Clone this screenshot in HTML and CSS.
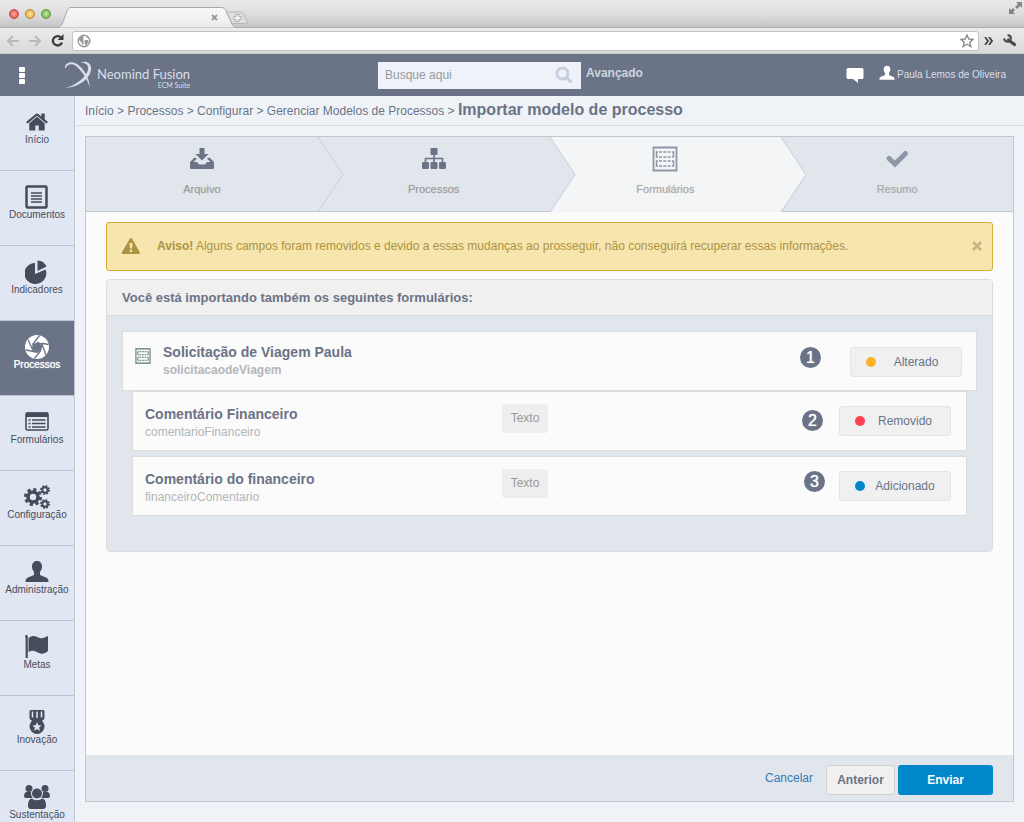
FILE: index.html
```html
<!DOCTYPE html>
<html lang="pt-BR">
<head>
<meta charset="utf-8">
<title>Importar modelo de processo</title>
<link rel="stylesheet" href="styles.css">
</head>
<body>
<svg class="defs" aria-hidden="true">
  <symbol id="i-user" viewBox="0 0 24 24"><path d="M12 1c3 0 5 2 5 5.500c0 2.500-1 4-2 5.500v3l6 2.500c2 1 2.500 2 2.500 4.500h-23c0-2.500.5-3.500 2.500-4.500l6-2.500v-3c-1-1.500-2-3-2-5.500c0-3.500 2-5.500 5-5.500z"/></symbol>
  <symbol id="i-form" viewBox="0 0 26 26"><path fill="none" stroke="currentColor" stroke-width="1.800" d="M1.500 1.500h23v23h-23z"/><path fill="none" stroke="currentColor" stroke-width="1.500" d="M6 6H4.500v5H6M20 6h1.500v5H20M6 15H4.500v5H6M20 15h1.500v5H20"/><path fill="none" stroke="currentColor" stroke-width="1.600" stroke-dasharray="3 1.300" d="M7 6h12M7 11h12M7 15h12M7 20h12"/></symbol>
</svg>

<div class="browser">
  <div class="tabstrip">
    <div class="lights"><i class="red"></i><i class="yellow"></i><i class="green"></i></div>
    <svg class="tab" width="194" height="21" viewBox="0 0 194 21">
      <defs><linearGradient id="tabfill" x1="0" y1="0" x2="0" y2="1"><stop offset="0" stop-color="#f8f8f8"/><stop offset="1" stop-color="#ececec"/></linearGradient></defs>
      <path d="M0 20.500C4 20 5 18 6 15L10 4C11 1.500 12 .5 14 .5H164C167 .5 168 1.500 169 4L174 15C175 18 177 20 180 20.500" fill="url(#tabfill)" stroke="#a9a9a9"/>
      <path d="M155 8l5 5M160 8l-5 5" stroke="#999" stroke-width="1.800"/>
      <path d="M171 5H183C185 5 186 6 187 8L190 14C191 16 190 16.500 188 16.500H178C176 16.500 175 16 174 14L171 8C170 6 170 5 171 5z" fill="#dedede" stroke="#b5b5b5"/>
      <path d="M180.500 7v8M176.500 11h8" stroke="#b0b0b0" stroke-width="4"/><path d="M180.500 8v6M177.500 11h6" stroke="#f3f3f3" stroke-width="2"/>
    </svg>
    <svg class="expand" width="13" height="12" viewBox="0 0 13 12"><path d="M7 0h6v6l-2-2-3 3-2-2 3-3zM6 12h-6v-6l2 2 2-2 2 2-2 2z" fill="#858585"/></svg>
  </div>
  <div class="toolbar">
    <svg width="12" height="12" viewBox="0 0 12 12"><path d="M12 6H2M6 1L1 6l5 5" fill="none" stroke="#b9b9b9" stroke-width="2"/></svg>
    <svg width="12" height="12" viewBox="0 0 12 12"><path d="M0 6h10M6 1l5 5-5 5" fill="none" stroke="#b9b9b9" stroke-width="2"/></svg>
    <svg width="13" height="13" viewBox="0 0 13 13"><path d="M10 3.500A4.700 4.700 0 1 0 11 8.500" fill="none" stroke="#3c3c3c" stroke-width="2.300"/><path d="M12.500 0v6h-6z" fill="#3c3c3c"/></svg>
    <label class="url">
      <svg width="14" height="14" viewBox="0 0 14 14"><circle cx="7" cy="7" r="5.800" fill="#fff" stroke="#9a9a9a" stroke-width="1.400"/><path d="M3 3l3-1 1 1-1 2 1 1-1 1 1 2-1 2-2-3L2 6zM8 6l3 0 1 2-2 2-1 2-1-1 0-2-1-1zM9 2l2 1 0 1-2-1z" fill="#9a9a9a"/></svg>
      <input type="text" aria-label="Endereço">
      <svg width="14" height="14" viewBox="0 0 14 14"><path d="M7 1l1.800 4 4.200.4-3.200 2.800 1 4.300L7 10.200l-3.800 2.300 1-4.300L1 5.400 5.200 5z" fill="#fff" stroke="#8a8a8a" stroke-width="1.400"/></svg>
    </label>
    <svg width="9" height="8" viewBox="0 0 9 8"><path d="M1 0l3 4-3 4M5 0l3 4-3 4" fill="none" stroke="#444" stroke-width="1.800"/></svg>
    <svg width="14" height="13" viewBox="0 0 14 13"><path d="M5.500 6L11.500 10.500" fill="none" stroke="#4a4a4a" stroke-width="3.200" stroke-linecap="round"/><path d="M4.500 1.500C7 1 8.500 3 7.500 5.500M1 4.500C1.500 7.500 4 8 6 7.500" fill="none" stroke="#4a4a4a" stroke-width="2.200"/></svg>
  </div>
</div>

<header class="header">
  <button class="dots" aria-label="Menu"><i></i><i></i><i></i></button>
  <div class="logo">
    <svg width="28" height="28" viewBox="0 0 28 28"><path d="M1 8C0 2 7-1 13 3C19 7 25 15 26 27C23 17 17 9 12 5C8 2 3 3 1 8z"/><path d="M16 2C22-1 28 2 27 9C26 17 16 26 1 27C13 24 22 16 24 9C25 4 21 1 16 2z"/></svg>
    <div class="logo-text"><span>Neomind Fusion</span><small>ECM Suite</small></div>
  </div>
  <form class="search">
    <input type="search" placeholder="Busque aqui" aria-label="Busque aqui">
    <button type="button" aria-label="Buscar"><svg width="18" height="18" viewBox="0 0 18 18"><circle cx="7.500" cy="7.500" r="5.500" fill="none" stroke="#c5d0e0" stroke-width="3"/><path d="M11.500 11.500l4 4" stroke="#c5d0e0" stroke-width="3.200" stroke-linecap="round"/></svg></button>
  </form>
  <a class="advanced" href="#">Avançado</a>
  <div class="account">
    <svg width="18" height="15" viewBox="0 0 18 15"><path d="M2 0h14q1.500 0 1.500 1.500v8q0 1.500-1.500 1.500h-4v4l-5-4h-5q-1.500 0-1.500-1.500v-8q0-1.500 1.500-1.500z" fill="#fff"/></svg>
    <svg class="me" width="16" height="16"><use href="#i-user"/></svg>
    <span>Paula Lemos de Oliveira</span>
  </div>
</header>

<div class="body">
  <nav class="sidebar">
    <a href="#"><svg viewBox="0 0 1664 1792"><path d="M1408 992v480q0 26-19 45t-45 19h-384v-384h-256v384h-384q-26 0-45-19t-19-45v-480q0-1 .5-3t.5-3l575-474 575 474q1 2 1 6zm223-69l-62 74q-8 9-21 11h-3q-13 0-21-7l-692-577-692 577q-12 8-24 7-13-2-21-11l-62-74q-8-10-7-23.500t11-21.500l719-599q32-26 76-26t76 26l244 204v-195q0-14 9-23t23-9h192q14 0 23 9t9 23v408l219 182q10 8 11 21.500t-7 23.500z"/></svg>Início</a>
    <a href="#"><svg viewBox="0 0 24 24"><rect x="1.500" y="1.500" width="20" height="21" rx="1" fill="none" stroke="currentColor" stroke-width="2.500"/><path d="M6 8h11M6 11h11M6 14h11M6 17h11" stroke="currentColor" stroke-width="1.500"/></svg>Documentos</a>
    <a href="#"><svg viewBox="0 0 24 24"><path d="M10 3v11l10.500-4.500A11 10.500 0 1 1 10 3z"/><path d="M12.500 0.500V11L21.500 6.500A10 10 0 0 0 12.500.5z"/></svg>Indicadores</a>
    <a href="#" class="active"><svg viewBox="0 0 24 24"><circle cx="12" cy="12" r="12"/><path d="M12 7.500l4 2.200v4.600l-4 2.200-4-2.200V9.700z" fill="#6b7386"/><path d="M7.200 9.500L18 8.500 23.500 9.500M12 7l5 2.500L21 20M16.800 9.500L15.500 16 9.500 23.500M16 14.500L12 17.200 1 15M12 17L7.500 14.500 3 4.500M8 15V9L14.500.5" fill="none" stroke="#6b7386" stroke-width="1.300"/></svg>Processos</a>
    <a href="#"><svg viewBox="0 0 24 24"><rect x="1" y="3" width="22" height="17" rx="1.500" fill="none" stroke="currentColor" stroke-width="1.600"/><path d="M1 2.500h22V7H1z"/><path d="M7 10h13.500M7 13.500h13.500M7 17h13.500M3.500 10h2M3.500 13.500h2M3.500 17h2" stroke="currentColor" stroke-width="1.600"/></svg>Formulários</a>
    <a href="#"><svg class="wide" viewBox="0 0 26 24"><g fill="none" stroke="currentColor"><circle cx="9" cy="12" r="5" stroke-width="3.600"/><circle cx="9" cy="12" r="7.500" stroke-width="3" stroke-dasharray="3.200 2.690"/><circle cx="21" cy="5" r="2.700" stroke-width="2"/><circle cx="21" cy="5" r="4" stroke-width="2" stroke-dasharray="1.700 1.440"/><circle cx="21" cy="19" r="2.700" stroke-width="2"/><circle cx="21" cy="19" r="4" stroke-width="2" stroke-dasharray="1.700 1.440"/></g></svg>Configuração</a>
    <a href="#"><svg><use href="#i-user"/></svg>Administração</a>
    <a href="#"><svg viewBox="0 0 24 24"><path d="M0 1.500a1.300 1.300 0 0 1 2.800 0v21.500h-2.200V3z"/><path d="M3.500 3C8.500-.5 11 1.500 14.500 3C17.500 4 20 2.500 23 1V16C20 18.500 17 19.500 14 18C10 16 8 14.500 3.500 17z"/></svg>Metas</a>
    <a href="#"><svg viewBox="0 0 24 24"><path d="M6 0h12q1.500 0 1.500 1.500V8q0 2-3 3h-9q-3-1-3-3V1.500Q4.500 0 6 0z"/><path d="M7.500 1.500v6M12 1.500V8M16.500 1.500v6" stroke="#e1e7f2" stroke-width="1.500"/><circle cx="12" cy="16.500" r="7.500"/><path d="M12 12l1.300 3.200 3.400.2-2.600 2.200.8 3.300-2.900-1.800-2.900 1.800.8-3.300-2.600-2.200 3.400-.2z" fill="#e1e7f2"/></svg>Inovação</a>
    <a href="#"><svg class="wide" viewBox="0 0 26 24"><circle cx="5" cy="3.500" r="3.500"/><circle cx="21" cy="3.500" r="3.500"/><path d="M2 7h5q0 4 2 6H2q-2 0-2-2Q0 8 2 7zM24 7h-5q0 4-2 6h7q2 0 2-2Q26 8 24 7z"/><circle cx="13" cy="8.500" r="5.600" fill="#e1e7f2"/><circle cx="13" cy="8.500" r="5"/><path d="M7.500 13.500q2.500 1.800 5.500 1.800t5.500-1.800q3.500 1 3.500 7 0 3.500-3 3.500H7q-3 0-3-3.500 0-6 3.500-7z"/></svg>Sustentação</a>
  </nav>

  <main class="main">
    <div class="crumbs">
      <a href="#">Início</a> &gt; <a href="#">Processos</a> &gt; <a href="#">Configurar</a> &gt; <a href="#">Gerenciar Modelos de Processos</a> &gt; <h1>Importar modelo de processo</h1>
    </div>

    <section class="wizard">
      <ol class="steps">
        <li class="step">
          <svg class="step-icon" viewBox="0 0 26 26"><path d="M10.500 2h5v6h4L13 14.500 6.500 8h4z"/><path d="M5.500 11.500L8 12.500 4.500 16H8l2 2.500h6l2-2.500h3.500L18 12.500l2.500-1L25 16v6q0 1-1 1H2q-1 0-1-1v-6z"/></svg>
          <span>Arquivo</span>
          <svg class="chevron" width="26" height="75" viewBox="0 0 26 75"><path d="M0 0L25 37.500 0 75" /></svg>
        </li>
        <li class="step">
          <svg class="step-icon" viewBox="0 0 26 26"><rect x="9.500" y="2" width="7" height="7" rx="1.200"/><rect x="1" y="16" width="7" height="7" rx="1.200"/><rect x="9.500" y="16" width="7" height="7" rx="1.200"/><rect x="18" y="16" width="7" height="7" rx="1.200"/><path d="M13 8v9M4.500 17v-4.500h17V17" fill="none" stroke="currentColor" stroke-width="1.600"/></svg>
          <span>Processos</span>
          <svg class="chevron" width="26" height="75" viewBox="0 0 26 75"><path d="M0 0L25 37.500 0 75" /></svg>
        </li>
        <li class="step current">
          <svg class="step-icon"><use href="#i-form"/></svg>
          <span>Formulários</span>
          <svg class="chevron" width="26" height="75" viewBox="0 0 26 75"><path d="M0 0L25 37.500 0 75" /></svg>
        </li>
        <li class="step pending">
          <svg class="step-icon" viewBox="0 0 26 26"><path d="M5 12.500l6 5.500L21.500 7.500" fill="none" stroke="currentColor" stroke-width="5" stroke-linecap="round"/></svg>
          <span>Resumo</span>
        </li>
      </ol>

      <div class="content">
        <div class="alert" role="alert">
          <svg width="20" height="18" viewBox="0 0 20 18"><path d="M10 1q.7 0 1.200.8l7.500 13.500q.8 1.700-1 1.700H1.900q-1.800 0-1-1.700L8.800 1.800Q9.300 1 10 1z" fill="#ab9344"/><path d="M8.500 6h3l-.5 5.500H9zM8.800 12.800h2.400V15H8.800z" fill="#f6e5ad"/></svg>
          <p><b>Aviso!</b> Alguns campos foram removidos e devido a essas mudanças ao prosseguir, não conseguirá recuperar essas informações.</p>
          <button aria-label="Fechar"><svg width="10" height="10" viewBox="0 0 10 10"><path d="M1 1l8 8M9 1l-8 8" stroke="#c4b483" stroke-width="2.600"/></svg></button>
        </div>

        <section class="panel">
          <h2>Você está importando também os seguintes formulários:</h2>
          <div class="panel-body">
            <article class="card parent">
              <svg class="form-icon" width="16" height="16"><use href="#i-form"/></svg>
              <div class="names"><h3>Solicitação de Viagem Paula</h3><p>solicitacaodeViagem</p></div>
              <span class="num one">1</span>
              <button class="status"><i class="changed"></i><span>Alterado</span></button>
            </article>
            <article class="card child">
              <div class="names"><h3>Comentário Financeiro</h3><p>comentarioFinanceiro</p></div>
              <span class="type">Texto</span>
              <span class="num two">2</span>
              <button class="status"><i class="removed"></i><span>Removido</span></button>
            </article>
            <article class="card child spaced">
              <div class="names"><h3>Comentário do financeiro</h3><p>financeiroComentario</p></div>
              <span class="type">Texto</span>
              <span class="num three">3</span>
              <button class="status"><i class="added"></i><span>Adicionado</span></button>
            </article>
          </div>
        </section>
      </div>

      <footer class="actions">
        <a href="#">Cancelar</a>
        <button class="back">Anterior</button>
        <button class="send">Enviar</button>
      </footer>
    </section>
  </main>
</div>
</body>
</html>
```
FILE: styles.css
```css
* { box-sizing: border-box; }

body {
  margin: 0;
  height: 100vh;
  overflow: hidden;
  display: flex;
  flex-direction: column;
  background: #eff3f8;
  color: #6b7386;
  font: 12px/16px "Liberation Sans", Arial, sans-serif;
}

h1, h2, h3, p, ol { margin: 0; padding: 0; }
a { color: inherit; text-decoration: none; }
svg { display: block; flex: none; fill: currentColor; }
button, input { font: inherit; color: inherit; border: 0; padding: 0; background: none; outline: 0; }
button { cursor: pointer; }
.defs { position: absolute; width: 0; height: 0; }

/* Browser frame */
.browser { flex: none; }
.tabstrip {
  height: 28px;
  display: flex;
  align-items: flex-end;
  padding: 0 2px 0 9px;
  background: linear-gradient(#e9e9e9, #dedede 50%, #c6c6c6);
  border-bottom: 1px solid #adadad;
}
.lights { display: flex; gap: 6px; align-self: center; width: 48px; }
.lights i { width: 10px; height: 10px; border-radius: 50%; border: 1px solid; }
.lights .red { background: radial-gradient(#ffb0a8, #ee5a52 70%); border-color: #b04a48; }
.lights .yellow { background: radial-gradient(#ffeaa0, #f1b447 70%); border-color: #b08440; }
.lights .green { background: radial-gradient(#c4eda5, #7dbb58 70%); border-color: #5f8f4c; }
.tab { margin-bottom: -1px; }
.expand { margin: 2px 0 auto auto; }
.toolbar {
  height: 26px;
  display: flex;
  align-items: center;
  gap: 10px;
  padding: 0 7px;
  background: linear-gradient(#ebebeb, #d9d9d9);
  border-bottom: 1px solid #cbcbc7;
}
.url {
  flex: 1;
  display: flex;
  align-items: center;
  height: 20px;
  margin: 0 -5px 0 -2px;
  padding: 0 4px;
  background: #fff;
  border: 1px solid #c3c3c3;
  border-radius: 3px;
}
.url input { flex: 1; min-width: 0; }

/* Application header */
.header {
  flex: none;
  height: 42px;
  display: flex;
  align-items: center;
  padding: 0 18px 0 19px;
  background: #6b7386;
  color: #d9dfea;
}
.dots { display: grid; gap: 1px; }
.dots i { width: 6px; height: 5px; border-radius: 1px; background: #fff; }
.logo { display: flex; align-items: center; gap: 5px; flex: 0 0 314px; margin-left: 39px; }
.logo-text { display: grid; margin-top: 6px; font: 13px/14px Lato, "Open Sans", sans-serif; }
.logo-text small { font-size: 7px; line-height: 8px; text-align: right; }
.search { display: flex; align-items: center; width: 203px; height: 27px; background: #eff2f8; padding: 0 8px 0 7px; }
.search input { flex: 1; min-width: 0; }
.search input::placeholder { color: #999; opacity: 1; }
.advanced { margin: -4px 0 0 5px; font-weight: bold; color: #ccd5e2; }
.account { display: flex; align-items: center; margin-left: auto; font-size: 10px; color: #d9dfe9; }
.account .me { margin: 0 2px 4px 15px; fill: #fff; }

/* Sidebar */
.body { flex: 1; min-height: 0; display: flex; }
.sidebar {
  flex: 0 0 75px;
  overflow: hidden;
  background: #e1e7f2;
  border-right: 1px solid #bfc6d5;
}
.sidebar a {
  height: 75px;
  display: flex;
  flex-direction: column;
  align-items: center;
  padding-top: 14px;
  border-bottom: 1px solid #bcc4d4;
  color: #464c5b;
  font-size: 10px;
  line-height: 12px;
}
.sidebar svg { width: 24px; height: 24px; }
.sidebar svg.wide { width: 26px; }
.sidebar a.active { background: #6b7386; color: #fff; text-shadow: 0 0 1px #fff; }

/* Page */
.main { flex: 1; min-width: 0; display: flex; flex-direction: column; }
.crumbs { height: 30px; padding: 3px 10px 0; line-height: 22px; border-bottom: 1px solid #d9dde4; white-space: nowrap; }
.crumbs h1 { display: inline; font-size: 16px; }

.wizard {
  flex: 1;
  display: flex;
  flex-direction: column;
  margin: 10px 10px 20px;
  border: 1px solid #c1c7d0;
  background: #fbfbfb;
}
.steps { display: flex; list-style: none; }
.step {
  position: relative;
  flex: 1;
  height: 75px;
  display: flex;
  flex-direction: column;
  align-items: center;
  gap: 9px;
  padding-top: 9px;
  background: #e1e6ed;
  border-bottom: 1px solid #c1c7d0;
  font-size: 11px;
}
.step span { color: #999; text-shadow: 0 0 1px #c4c4c4; }
.step-icon { width: 26px; height: 26px; }
.current .step-icon, .pending .step-icon { color: #8e97a7; }
.current span, .pending span { color: #aaa; }
.step.current { background: #f4f5f7; border-bottom-color: #f4f5f7; }
.chevron { position: absolute; z-index: 1; left: 100%; top: 0; fill: #e1e6ed; stroke: #c7ccd5; }
.current .chevron { fill: #f4f5f7; }

.content { flex: 1; display: flex; flex-direction: column; gap: 8px; padding: 10px 20px; }
.alert {
  display: flex;
  align-items: center;
  min-height: 49px;
  padding: 0 10px 1px 14px;
  background: #f6e5ad;
  border: 1px solid #d4af37;
  border-radius: 3px;
  color: #ab9344;
}
.alert p { flex: 1; padding-left: 16px; }

.panel { border: 1px solid #dcdcdc; border-radius: 4px; overflow: hidden; }
.panel h2 { padding: 10px 15px 9px; background: #f0f0f0; border-bottom: 1px solid #dcdcdc; font-size: 13px; line-height: 16px; }
.panel-body { padding: 15px 15px 35px; background: #e1e6ed; }
.card {
  display: flex;
  align-items: center;
  height: 60px;
  padding: 0 14px 0 12px;
  background: #fbfbfb;
  border: 1px solid #dcdcdc;
}
.child { margin: 0 10px; padding-right: 15px; }
.spaced { margin-top: 5px; }
.form-icon { margin: 0 12px 10px 0; color: #5c7868; }
.names { align-self: flex-start; padding-top: 13px; }
.parent .names { padding-top: 11px; }
.names h3 { font-size: 14px; line-height: 18px; }
.names p { line-height: 18px; color: #b3b5ba; }
.parent p { font-weight: bold; }
.child .names { flex: 0 0 44%; }
.type {
  align-self: flex-start;
  margin: 12px 0 0 2px;
  padding: 6px 9px 7px;
  background: #eee;
  border-radius: 3px;
  color: #999;
}
.num {
  width: 21px;
  height: 21px;
  margin-left: auto;
  border-radius: 50%;
  background: #6b7386;
  color: #fff;
  font-size: 16px;
  line-height: 21px;
  text-align: center;
  text-shadow: 0 0 1px #fff;
}
.one { margin-right: 29px; margin-bottom: 8px; }
.two { margin-right: 16px; margin-bottom: 1px; }
.three { margin-right: 14px; margin-bottom: 10px; }
.status {
  display: flex;
  align-items: center;
  width: 112px;
  height: 30px;
  padding: 0 5px 0 15px;
  background: #f0f0f0;
  border: 1px solid #e4e4e4;
  border-radius: 3px;
}
.parent .status { margin-top: 2px; }
.status span { flex: 1; text-align: center; }
.status i { width: 10px; height: 10px; border-radius: 50%; }
.changed { background: #ffb128; }
.removed { background: #ff4054; }
.added { background: #0086ca; }

.actions {
  display: flex;
  align-items: center;
  justify-content: flex-end;
  height: 46px;
  padding: 3px 20px 0;
  background: #e1e6ed;
}
.actions a { margin: 0 13px 4px 0; color: #337ab7; }
.actions button { height: 30px; border-radius: 3px; font-weight: bold; }
.back { width: 69px; margin-right: 3px; background: #f0f0f0; border: 1px solid #d1d1d1; }
.send { width: 95px; background: #0086ca; color: #fff; }
```
